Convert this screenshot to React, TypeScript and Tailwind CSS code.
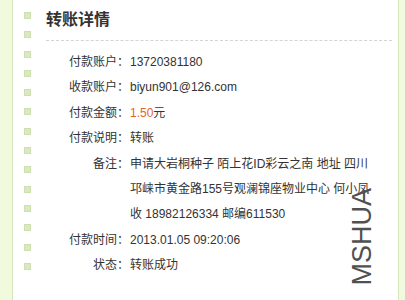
import React from "react";

const rows: { label: string; value: React.ReactNode }[] = [
  { label: "付款账户：", value: "13720381180" },
  { label: "收款账户：", value: "biyun901@126.com" },
  {
    label: "付款金额：",
    value: (
      <>
        <span className="text-[#e0662a]">1.50</span>元
      </>
    ),
  },
  { label: "付款说明：", value: "转账" },
  {
    label: "备注：",
    value: (
      <>
        <span className="block whitespace-nowrap">申请大岩桐种子 陌上花ID彩云之南 地址 四川</span>
        <span className="block whitespace-nowrap">邛崃市黄金路155号观澜锦座物业中心 何小凤</span>
        <span className="block whitespace-nowrap">收 18982126334 邮编611530</span>
      </>
    ),
  },
  { label: "付款时间：", value: "2013.01.05 09:20:06" },
  { label: "状态：", value: "转账成功" },
];

const App = () => {
  return (
    <div
      className="relative flex h-[300px] w-[405px] overflow-hidden bg-white text-[12px] text-[#333]"
      style={{ fontFamily: '"Liberation Sans", "Noto Sans CJK SC", sans-serif' }}
    >
      {/* 左边框 */}
      <div className="w-[13px] shrink-0 border-r border-[#d6e6bc] bg-[#f1fadc]" />

      {/* 圆点 */}
      <div className="flex w-[33px] shrink-0 flex-col gap-[12.3px] pl-[11px] pt-[12px]">
        {Array.from({ length: 14 }).map((_, i) => (
          <div key={i} className="h-[7px] w-[7px] border border-[#cfe0b0] bg-[#dbe9c2]" />
        ))}
      </div>

      {/* 内容 */}
      <div className="flex-1 pr-[6px] pt-[10px]">
        <h2 className="text-[16px] font-bold leading-[20px] text-[#333]">转账详情</h2>
        <div className="mt-[10px] border-t border-dashed border-[#d4d4d4]" />
        <div className="mt-[9px] grid grid-cols-[83px_1fr] leading-[25.4px]">
          {rows.map((r) => (
            <React.Fragment key={r.label}>
              <div className="text-right">{r.label}</div>
              <div className="pl-[1px]">{r.value}</div>
            </React.Fragment>
          ))}
        </div>
      </div>

      {/* 右边框 */}
      <div className="w-[7px] shrink-0 border-l border-[#d6e6bc] bg-[#f1fadc]" />

      {/* 水印 */}
      <div className="pointer-events-none absolute left-[314px] top-[224px] w-[96px] -rotate-90 text-center text-[27px] leading-[27px] text-[#505050]">
        MSHUA
      </div>
    </div>
  );
};

export default App;
